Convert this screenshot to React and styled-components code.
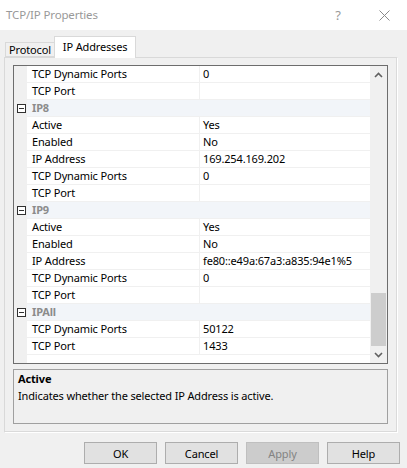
import React from 'react';
import styled, { createGlobalStyle } from 'styled-components';

const GlobalStyle = createGlobalStyle`
  html, body {
    margin: 0;
    padding: 0;
    background: #f0f0f0;
  }
  body {
    font-family: "Noto Sans", "Liberation Sans", sans-serif;
    font-size: 11px;
    letter-spacing: -0.15px;
    color: #000;
  }
`;

const Window = styled.div`
  width: 407px;
  height: 468px;
  display: flex;
  flex-direction: column;
  background: #f0f0f0;
  overflow: hidden;
`;

const TitleBar = styled.div`
  height: 30px;
  background: #ffffff;
  display: flex;
  align-items: center;
  padding-left: 6px;
  color: #999999;
  font-size: 11.5px;
`;

const Title = styled.div`
  flex: 1;
  margin-top: -2px;
`;

const TitleButton = styled.div`
  width: 46px;
  height: 30px;
  display: flex;
  align-items: center;
  justify-content: center;
  color: #999999;
  font-size: 13px;
`;

const Body = styled.div`
  padding: 6px 9px 0 4px;
  display: flex;
  flex-direction: column;
`;

const TabStrip = styled.div`
  display: flex;
  align-items: flex-end;
  padding-left: 1px;
  height: 21px;
  position: relative;
  z-index: 1;
`;

const Tab = styled.div`
  height: ${(p) => (p.$active ? '22px' : '15px')};
  margin-bottom: ${(p) => (p.$active ? '-1px' : '0')};
  padding: 0 ${(p) => (p.$active ? '8px' : '3px')};
  border: 1px solid #d9d9d9;
  border-bottom: ${(p) => (p.$active ? 'none' : '1px solid #d9d9d9')};
  margin-left: ${(p) => (p.$active ? '-1px' : '0')};
  background: ${(p) => (p.$active ? '#ffffff' : '#f0f0f0')};
  display: flex;
  align-items: ${(p) => (p.$active ? 'flex-start' : 'center')};
  padding-top: ${(p) => (p.$active ? '2px' : '0')};
  box-sizing: border-box;
  line-height: 16px;
  white-space: nowrap;
`;

const TabPanel = styled.div`
  height: 376px;
  box-sizing: border-box;
  border: 1px solid #d9d9d9;
  border-right-color: #ffffff;
  border-bottom-color: #ffffff;
  box-shadow: inset -1px -1px 0 #dadada;
  background: #f0f0f0;
  padding: 7px 9px 0 8px;
  display: flex;
  flex-direction: column;
  gap: 5px;
`;

const Grid = styled.div`
  height: 299px;
  box-sizing: border-box;
  border: 1px solid #6d6d6d;
  background: #ffffff;
  display: flex;
`;

const Gutter = styled.div`
  width: 13px;
  background: #f0f0f0;
  display: flex;
  flex-direction: column;
`;

const GutterCell = styled.div`
  height: 17px;
  display: flex;
  align-items: center;
  justify-content: center;
  padding-left: 1px;
`;

const MinusBox = styled.div`
  width: 7px;
  height: 7px;
  border: 1px solid #303030;
  position: relative;
  background: #fff;

  &::after {
    content: '';
    position: absolute;
    left: 1px;
    right: 1px;
    top: 3px;
    height: 1px;
    background: #303030;
  }
`;

const Rows = styled.div`
  flex: 1;
  display: flex;
  flex-direction: column;
`;

const Row = styled.div`
  height: 17px;
  box-sizing: border-box;
  border-bottom: 1px solid #f0f0f0;
  display: flex;
  background: ${(p) => (p.$category ? '#f2f5f9' : '#ffffff')};
  line-height: 16px;
`;

const Label = styled.div`
  width: 172px;
  padding-left: 5px;
  box-sizing: border-box;
  color: ${(p) => (p.$category ? '#8c8c8c' : '#000')};
  font-weight: ${(p) => (p.$category ? 700 : 400)};
  white-space: nowrap;
`;

const Value = styled.div`
  flex: 1;
  padding-left: 3px;
  border-left: 1px solid #f0f0f0;
  white-space: nowrap;
`;

const ScrollBar = styled.div`
  width: 17px;
  background: #f0f0f0;
  display: flex;
  flex-direction: column;
`;

const ScrollArrow = styled.div`
  height: 17px;
  display: flex;
  align-items: center;
  justify-content: center;
`;

const ScrollTrack = styled.div`
  flex: 1;
  display: flex;
  flex-direction: column;
  justify-content: flex-end;
  align-items: center;
`;

const Thumb = styled.div`
  width: 15px;
  height: 53px;
  background: #cdcdcd;
`;

const Description = styled.div`
  height: 55px;
  box-sizing: border-box;
  border: 1px solid #a0a0a0;
  padding: 0 4px;
  line-height: 17px;
`;

const DescTitle = styled.div`
  font-weight: 700;
`;

const ButtonRow = styled.div`
  display: flex;
  justify-content: flex-end;
  gap: 8px;
  padding: 9px 7px 0 0;
`;

const Button = styled.div`
  width: 73px;
  height: 22px;
  box-sizing: border-box;
  border: 1px solid ${(p) => (p.$disabled ? '#bfbfbf' : '#adadad')};
  background: ${(p) => (p.$disabled ? '#cccccc' : '#e1e1e1')};
  color: ${(p) => (p.$disabled ? '#838383' : '#000')};
  display: flex;
  align-items: center;
  justify-content: center;
`;

const Chevron = ({ up }) => (
  <svg width="9" height="6" viewBox="0 0 9 6">
    <path
      d={up ? 'M1 5 L4.5 1.5 L8 5' : 'M1 1 L4.5 4.5 L8 1'}
      fill="none"
      stroke="#606060"
      strokeWidth="1.6"
    />
  </svg>
);

const rows = [
  { label: 'TCP Dynamic Ports', value: '0' },
  { label: 'TCP Port', value: '' },
  { label: 'IP8', category: true },
  { label: 'Active', value: 'Yes' },
  { label: 'Enabled', value: 'No' },
  { label: 'IP Address', value: '169.254.169.202' },
  { label: 'TCP Dynamic Ports', value: '0' },
  { label: 'TCP Port', value: '' },
  { label: 'IP9', category: true },
  { label: 'Active', value: 'Yes' },
  { label: 'Enabled', value: 'No' },
  { label: 'IP Address', value: 'fe80::e49a:67a3:a835:94e1%5' },
  { label: 'TCP Dynamic Ports', value: '0' },
  { label: 'TCP Port', value: '' },
  { label: 'IPAll', category: true },
  { label: 'TCP Dynamic Ports', value: '50122' },
  { label: 'TCP Port', value: '1433' },
];

export default function App() {
  return (
    <>
      <GlobalStyle />
      <Window>
        <TitleBar>
          <Title>TCP/IP Properties</Title>
          <TitleButton>?</TitleButton>
          <TitleButton>
            <svg width="11" height="11" viewBox="0 0 11 11">
              <path d="M0.5 0.5 L10.5 10.5 M10.5 0.5 L0.5 10.5" stroke="#8a8a8a" strokeWidth="1" />
            </svg>
          </TitleButton>
        </TitleBar>
        <Body>
          <TabStrip>
            <Tab>Protocol</Tab>
            <Tab $active>IP Addresses</Tab>
          </TabStrip>
          <TabPanel>
            <Grid>
              <Gutter>
                {rows.map((r, i) => (
                  <GutterCell key={i}>{r.category && <MinusBox />}</GutterCell>
                ))}
              </Gutter>
              <Rows>
                {rows.map((r, i) =>
                  r.category ? (
                    <Row key={i} $category>
                      <Label $category>{r.label}</Label>
                    </Row>
                  ) : (
                    <Row key={i}>
                      <Label>{r.label}</Label>
                      <Value>{r.value}</Value>
                    </Row>
                  )
                )}
              </Rows>
              <ScrollBar>
                <ScrollArrow>
                  <Chevron up />
                </ScrollArrow>
                <ScrollTrack>
                  <Thumb />
                </ScrollTrack>
                <ScrollArrow>
                  <Chevron />
                </ScrollArrow>
              </ScrollBar>
            </Grid>
            <Description>
              <DescTitle>Active</DescTitle>
              <div>Indicates whether the selected IP Address is active.</div>
            </Description>
          </TabPanel>
        </Body>
        <ButtonRow>
          <Button>OK</Button>
          <Button>Cancel</Button>
          <Button $disabled>Apply</Button>
          <Button>Help</Button>
        </ButtonRow>
      </Window>
    </>
  );
}
